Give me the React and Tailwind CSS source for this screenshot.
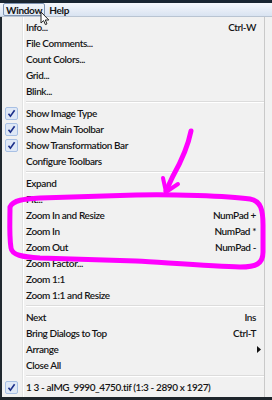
import React from 'react';

// Window menu groups, separators between each group
const groups = [
  [
    { label: 'Info...', shortcut: 'Ctrl-W' },
    { label: 'File Comments...' },
    { label: 'Count Colors...' },
    { label: 'Grid...' },
    { label: 'Blink...' },
  ],
  [
    { label: 'Show Image Type', checked: true },
    { label: 'Show Main Toolbar', checked: true },
    { label: 'Show Transformation Bar', checked: true },
    { label: 'Configure Toolbars' },
  ],
  [
    { label: 'Expand' },
    { label: 'Fit...' },
    { label: 'Zoom In and Resize', shortcut: 'NumPad +' },
    { label: 'Zoom In', shortcut: 'NumPad *' },
    { label: 'Zoom Out', shortcut: 'NumPad -' },
    { label: 'Zoom Factor...' },
    { label: 'Zoom 1:1' },
    { label: 'Zoom 1:1 and Resize' },
  ],
  [
    { label: 'Next', shortcut: 'Ins' },
    { label: 'Bring Dialogs to Top', shortcut: 'Ctrl-T' },
    { label: 'Arrange', submenu: true },
    { label: 'Close All' },
  ],
  [{ label: '1 3 - aIMG_9990_4750.tif (1:3 - 2890 x 1927)', checked: true }],
];

const Check = () => (
  <div className="w-[13px] h-[13px] ml-[3px] rounded-[2px] border border-[#a8c0e4] bg-[#dfe8f6] flex items-center justify-center">
    <svg width="9" height="9" viewBox="0 0 9 9">
      <path d="M1.5 4.8 L3.4 7.2 L7.6 1.2" fill="none" stroke="#1c2f8a" strokeWidth="1.6" />
    </svg>
  </div>
);

const MenuItem = ({ item }) => (
  <div className="h-4 flex items-center">
    <div className="w-[24px] shrink-0 flex items-center">{item.checked && <Check />}</div>
    <div className="flex-1 whitespace-nowrap">{item.label}</div>
    {item.shortcut && <div className="pr-[8px] whitespace-nowrap">{item.shortcut}</div>}
    {item.submenu && (
      <svg width="4" height="7" viewBox="0 0 4 7" className="mr-[3px]">
        <path d="M0 0 L4 3.5 L0 7 Z" fill="#111" />
      </svg>
    )}
  </div>
);

const Separator = () => (
  <div className="h-[6px] flex items-center pl-[24px]">
    <div className="w-full border-t border-[#dcdcdc] border-b border-b-white" />
  </div>
);

export default function App() {
  return (
    <div className="w-[272px] h-[400px] relative overflow-hidden bg-[#f1f1f1] flex flex-col text-[10px] tracking-[-0.4px] text-[#151515] font-['Lato','Liberation_Sans',sans-serif] font-semibold leading-none">
      <div className="h-[3px] bg-[#1a2632]" />
      {/* menu bar */}
      <div className="h-[14px] flex items-center bg-gradient-to-b from-[#f6f8fc] to-[#d9e3f1] border-b border-[#b9c4d2] tracking-[-0.3px]">
        <div className="ml-[3px] h-[13px] px-[2px] flex items-center border border-[#7f94b2] rounded-[2px] bg-gradient-to-b from-[#f2f6fb] to-[#dfe8f4] font-bold">
          Window
        </div>
        <div className="ml-[4px] font-bold">Help</div>
      </div>
      {/* dropdown panel */}
      <div className="flex-1 w-[265px] border-l-2 border-l-[#20282f] border-r border-r-[#c9c9c9] pt-[2px] bg-[linear-gradient(to_right,#f1f1f1_20px,#e2e3e3_20px,#e2e3e3_21px,#ffffff_21px,#ffffff_22px,#f1f1f1_22px)]">
        {groups.map((group, gi) => (
          <div key={gi}>
            {gi > 0 && <Separator />}
            {group.map((item) => (
              <MenuItem key={item.label} item={item} />
            ))}
          </div>
        ))}
      </div>
      <div className="h-[3px] bg-[#1e252b]" />

      {/* mouse pointer */}
      <svg className="absolute left-[40px] top-[11px]" width="10" height="15" viewBox="0 0 10 15">
        <path d="M1 1 L1 12 L3.6 9.6 L5.4 13.6 L7 12.9 L5.3 9 L8.8 9 Z" fill="#fff" stroke="#222" strokeWidth="1" strokeLinejoin="round" />
      </svg>

      {/* magenta annotation */}
      <svg className="absolute inset-0 pointer-events-none" width="272" height="400" viewBox="0 0 272 400">
        <path
          d="M10 207 C13 200 24 199 40 198 L136 195 C170 194 228 196 250 199 C261 201 263 210 263 225 L263 252 C263 264 256 267 240 267 C215 266 170 263 136 261 L40 258 C22 257 12 255 11 248 C9 235 10 220 10 207"
          fill="none"
          stroke="#ff00ff"
          strokeWidth="5"
          strokeLinecap="round"
        />
        <path d="M191 131 C188 146 182 160 173 176 L166 191" fill="none" stroke="#ff00ff" strokeWidth="5" strokeLinecap="round" />
        <path d="M163 178 L166 192 L178 184" fill="none" stroke="#ff00ff" strokeWidth="4" strokeLinecap="round" strokeLinejoin="round" />
      </svg>
    </div>
  );
}
